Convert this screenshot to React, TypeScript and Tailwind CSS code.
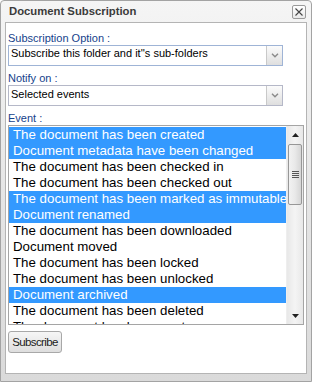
import React from 'react';

type Item = { label: string; selected?: boolean };

const events: Item[] = [
  { label: 'The document has been created', selected: true },
  { label: 'Document metadata have been changed', selected: true },
  { label: 'The document has been checked in' },
  { label: 'The document has been checked out' },
  { label: 'The document has been marked as immutable', selected: true },
  { label: 'Document renamed', selected: true },
  { label: 'The document has been downloaded' },
  { label: 'Document moved' },
  { label: 'The document has been locked' },
  { label: 'The document has been unlocked' },
  { label: 'Document archived', selected: true },
  { label: 'The document has been deleted' },
  { label: 'The document has been sent' },
];

const font = { fontFamily: '"Liberation Sans", Arial, sans-serif' };

function Combo({ value, focused, textPad }: { value: string; focused?: boolean; textPad: string }) {
  return (
    <div
      className={`flex h-[21px] w-[275px] border bg-white ${focused ? 'border-[#9fb4d6]' : 'border-[#b5b8c8]'}`}
    >
      <div className={`flex-1 pl-[2px] ${textPad} text-[11px] leading-[13px] text-black whitespace-nowrap overflow-hidden`}>
        {value}
      </div>
      <div className="w-[16px] h-full border-l border-[#c9c9c9] bg-gradient-to-b from-[#fbfbfb] to-[#dfdfdf] flex items-center justify-center">
        <svg width="8" height="5" viewBox="0 0 8 5">
          <polyline points="1,0.8 4,3.8 7,0.8" fill="none" stroke="#8a8a8a" strokeWidth="1.4" />
        </svg>
      </div>
    </div>
  );
}

function Scrollbar() {
  return (
    <div className="w-[17px] h-full bg-gradient-to-r from-[#e8e8e8] via-[#f4f4f4] to-[#e8e8e8] flex flex-col border-l border-[#eeeeee]">
      <div className="h-[17px] flex items-center justify-center">
        <svg width="7" height="4" viewBox="0 0 7 4">
          <polygon points="3.5,0 7,4 0,4" fill="#222" />
        </svg>
      </div>
      <div className="mx-[1px] mt-[1px] h-[61px] rounded-[2px] border border-[#979797] bg-gradient-to-r from-[#f2f2f2] via-[#e9e9e9] to-[#d6d6d6] flex flex-col items-center justify-center gap-[1px]">
        <div className="w-[7px] h-[1px] bg-[#555]" />
        <div className="w-[7px] h-[1px] bg-[#555]" />
        <div className="w-[7px] h-[1px] bg-[#555]" />
        <div className="w-[7px] h-[1px] bg-[#555]" />
      </div>
      <div className="flex-1" />
      <div className="h-[17px] flex items-center justify-center">
        <svg width="7" height="4" viewBox="0 0 7 4">
          <polygon points="0,0 7,0 3.5,4" fill="#222" />
        </svg>
      </div>
    </div>
  );
}

export default function App() {
  return (
    <div
      className="w-[312px] h-[382px] border border-[#a3a3a3] rounded-t-[4px] bg-gradient-to-b from-[#f5f5f5] via-[#e6e6e6] to-[#dadada] flex flex-col px-[4px] pb-[7px]"
      style={font}
    >
      <div className="h-[21px] flex items-center justify-between">
        <span className="pl-[4px] text-[11.3px] leading-[13px] font-bold text-[#3b3b3b]">
          Document Subscription
        </span>
        <div className="mr-[1px] w-[14px] h-[14px] rounded-[2px] border border-[#9a9a9a] bg-gradient-to-b from-[#ffffff] to-[#e9e9e9] flex items-center justify-center">
          <svg width="10" height="10" viewBox="0 0 10 10">
            <path d="M1.5 1.5 L8.5 8.5 M8.5 1.5 L1.5 8.5" stroke="#444" strokeWidth="1.1" />
          </svg>
        </div>
      </div>

      <div className="flex-1 border border-[#b4b4b4] bg-white pl-[2px] pr-[1px] pt-[9px] flex flex-col">
        <label className="h-[13px] text-[11px] leading-[13px] text-[#15428b]">Subscription Option :</label>
        <Combo value={'Subscribe this folder and it\'\'s sub-folders'} focused textPad="pt-[1px]" />

        <label className="mt-[6px] h-[13px] text-[11px] leading-[13px] text-[#15428b]">Notify on :</label>
        <Combo value="Selected events" textPad="pt-[2px]" />

        <label className="mt-[6px] h-[13px] text-[11px] leading-[13px] text-[#15428b]">Event :</label>
        <div className="w-[296px] h-[200px] border border-[#a5a5a5] flex">
          <div className="flex-1 pt-[1px] overflow-hidden">
            {events.map(e => (
              <div
                key={e.label}
                className={`h-[16px] pl-[4px] text-[13.3px] leading-[16px] whitespace-nowrap overflow-hidden ${
                  e.selected ? 'bg-[#3399ff] text-white' : 'text-black'
                }`}
              >
                {e.label}
              </div>
            ))}
          </div>
          <Scrollbar />
        </div>

        <div className="mt-[4px]">
          <button className="w-[54px] h-[22px] rounded-[3px] border border-[#a8a8a8] bg-gradient-to-b from-[#f6f6f6] to-[#dedede] text-[11.5px] tracking-[-0.6px] text-[#1a1a1a] leading-[20px]">
            Subscribe
          </button>
        </div>
      </div>
    </div>
  );
}
